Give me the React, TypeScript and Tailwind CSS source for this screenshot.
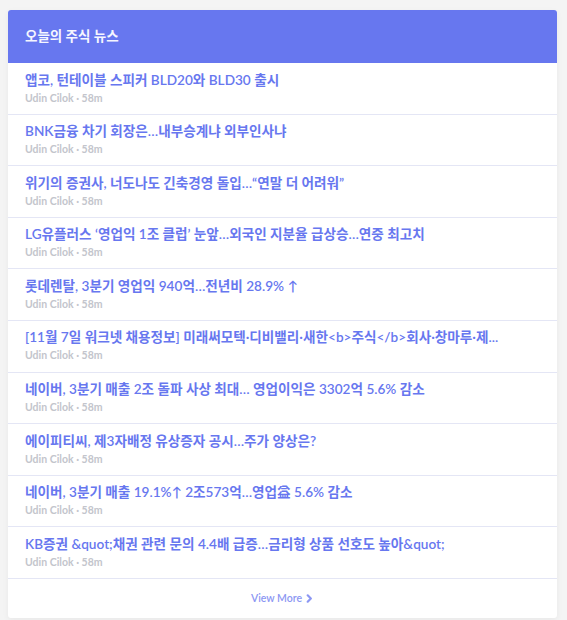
const news = [
  "앱코, 턴테이블 스피커 BLD20와 BLD30 출시",
  "BNK금융 차기 회장은…내부승계냐 외부인사냐",
  "위기의 증권사, 너도나도 긴축경영 돌입…“연말 더 어려워”",
  "LG유플러스 ‘영업익 1조 클럽’ 눈앞…외국인 지분율 급상승…연중 최고치",
  "롯데렌탈, 3분기 영업익 940억…전년비 28.9% ↑",
  "[11월 7일 워크넷 채용정보] 미래써모텍·디비밸리·새한<b>주식</b>회사·창마루·제...",
  "네이버, 3분기 매출 2조 돌파 사상 최대… 영업이익은 3302억 5.6% 감소",
  "에이피티씨, 제3자배정 유상증자 공시…주가 양상은?",
  "네이버, 3분기 매출 19.1%↑ 2조573억…영업益 5.6% 감소",
  "KB증권 &quot;채권 관련 문의 4.4배 급증…금리형 상품 선호도 높아&quot;",
];

export default function App() {
  return (
    <div
      className="min-h-[620px] bg-[#f4f4f4] pt-[10px] pl-[8px] pr-[10px]"
      style={{ fontFamily: 'Lato, "Noto Sans CJK KR", sans-serif' }}
    >
      <div className="bg-white rounded-[3px] shadow-[0_2px_6px_rgba(0,0,0,0.05)] overflow-hidden">
        <div className="h-[53px] bg-[#6777ef] flex items-center px-[17px]">
          <h4 className="text-[13.5px] font-semibold text-[#f5f6ff]">오늘의 주식 뉴스</h4>
        </div>
        <ul>
          {news.map((title, i) => (
            <li
              key={i}
              className="border-b border-[#e4e6f5] px-[17px] pt-[6.5px] h-[51.6px]"
            >
              <div className="text-[13.6px] leading-[20px] font-semibold text-[#6777ef] truncate">
                {title}
              </div>
              <div className="text-[10.5px] leading-[17px] font-bold text-[#c3c5cc]">
                Udin Cilok · 58m
              </div>
            </li>
          ))}
        </ul>
        <div className="h-[39px] flex items-center justify-center">
          <a className="flex items-center gap-[3px] text-[10.5px] text-[#8c97f3] font-semibold">
            View More
            <svg className="w-[9px] h-[9px]" viewBox="0 0 10 10" fill="none" stroke="currentColor" strokeWidth={2.4}>
              <path d="M3 1.5 6.5 5 3 8.5" strokeLinecap="round" strokeLinejoin="round" />
            </svg>
          </a>
        </div>
      </div>
    </div>
  );
}
